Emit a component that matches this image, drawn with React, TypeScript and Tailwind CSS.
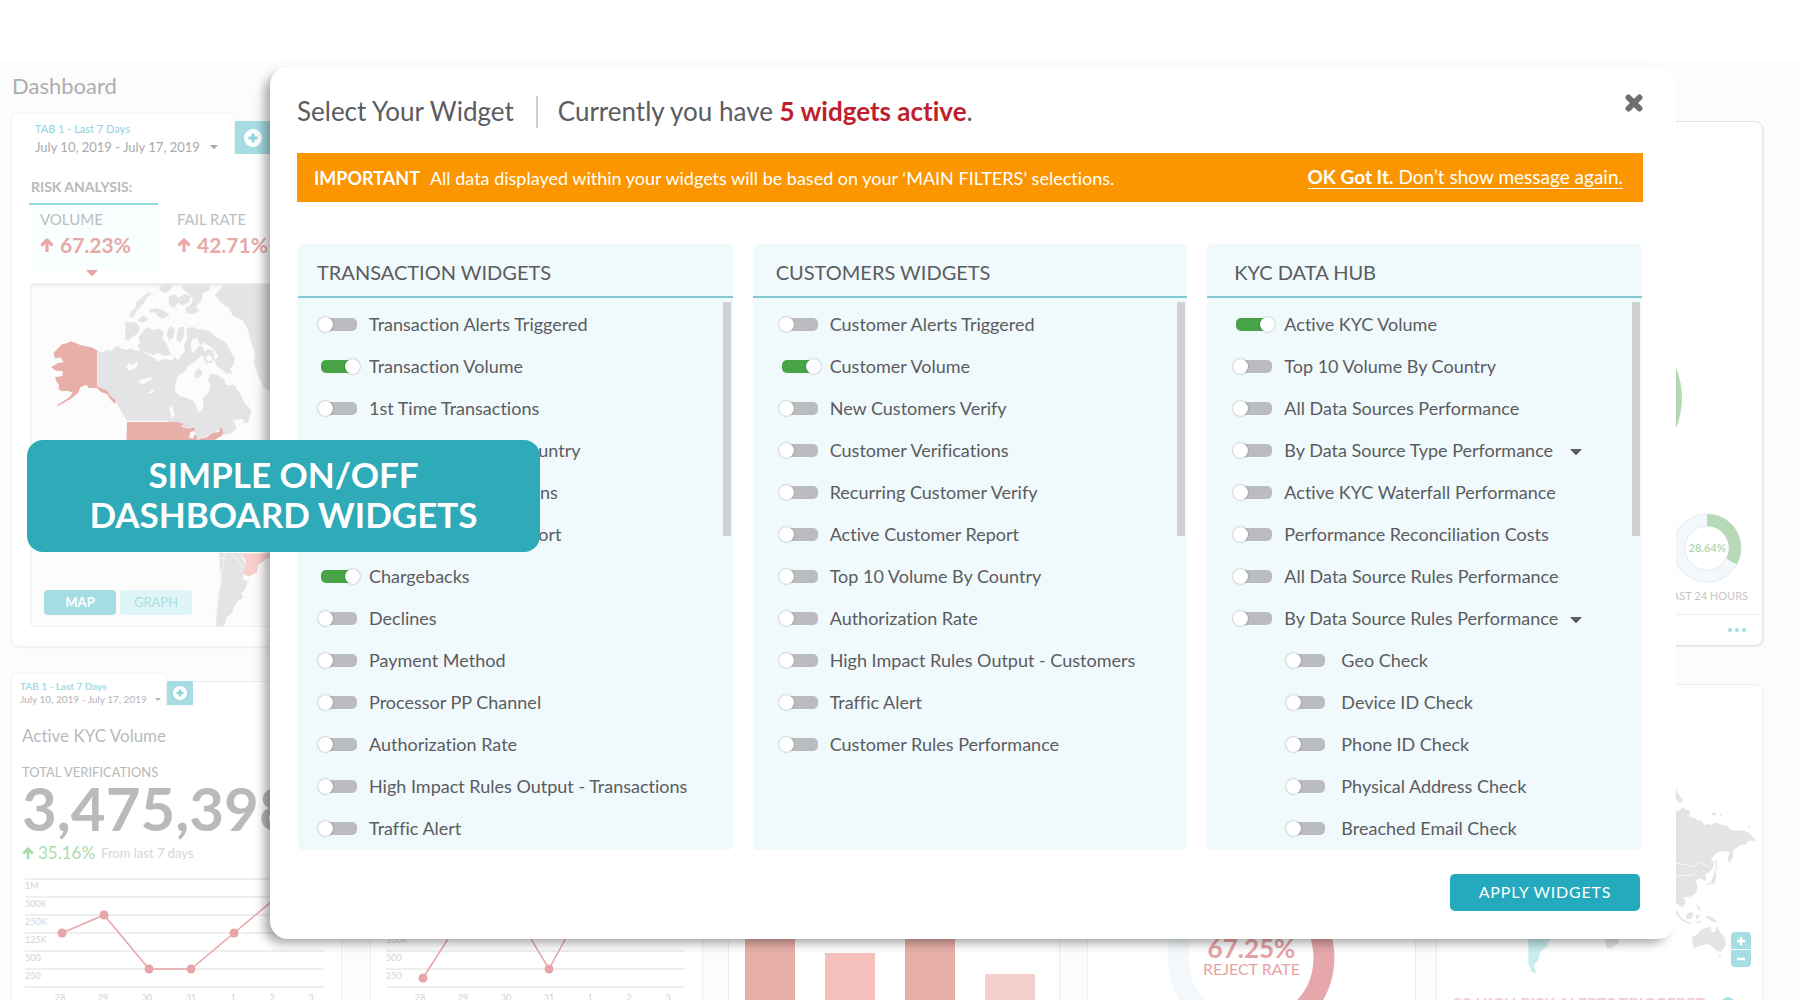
import { useState } from "react";

type Widget = { name: string; on?: boolean; menu?: boolean; nested?: boolean };

const TRANSACTIONS: Widget[] = [
  { name: "Transaction Alerts Triggered" },
  { name: "Transaction Volume", on: true },
  { name: "1st Time Transactions" },
  { name: "Top 10 Volume By Country" },
  { name: "Completed Transactions" },
  { name: "Daily Transaction Report" },
  { name: "Chargebacks", on: true },
  { name: "Declines" },
  { name: "Payment Method" },
  { name: "Processor PP Channel" },
  { name: "Authorization Rate" },
  { name: "High Impact Rules Output - Transactions" },
  { name: "Traffic Alert" },
];

const CUSTOMERS: Widget[] = [
  { name: "Customer Alerts Triggered" },
  { name: "Customer Volume", on: true },
  { name: "New Customers Verify" },
  { name: "Customer Verifications" },
  { name: "Recurring Customer Verify" },
  { name: "Active Customer Report" },
  { name: "Top 10 Volume By Country" },
  { name: "Authorization Rate" },
  { name: "High Impact Rules Output - Customers" },
  { name: "Traffic Alert" },
  { name: "Customer Rules Performance" },
];

const KYC: Widget[] = [
  { name: "Active KYC Volume", on: true },
  { name: "Top 10 Volume By Country" },
  { name: "All Data Sources Performance" },
  { name: "By Data Source Type Performance", menu: true },
  { name: "Active KYC Waterfall Performance" },
  { name: "Performance Reconciliation Costs" },
  { name: "All Data Source Rules Performance" },
  { name: "By Data Source Rules Performance", menu: true },
  { name: "Geo Check", nested: true },
  { name: "Device ID Check", nested: true },
  { name: "Phone ID Check", nested: true },
  { name: "Physical Address Check", nested: true },
  { name: "Breached Email Check", nested: true },
];

function Caret({ className }: { className: string }) {
  return (
    <svg viewBox="0 0 12 6" className={className} aria-hidden="true">
      <path d="M0 0h12L7 5.5q-1 .8-2 0z" fill="currentColor" />
    </svg>
  );
}

function ArrowUp({ className }: { className: string }) {
  return (
    <svg viewBox="0 0 14 14" className={className} aria-hidden="true">
      <path d="M7 14V2.5M1.500 7.500L7 2l5.500 5.500" fill="none" stroke="currentColor" strokeWidth="3.200" strokeLinejoin="round" />
    </svg>
  );
}

function PlusCircle({ className }: { className: string }) {
  return (
    <svg viewBox="0 0 18 18" className={className} aria-hidden="true">
      <circle cx="9" cy="9" r="9" fill="#fff" />
      <path d="M9 4.5v9M4.5 9h9" stroke="#8fd5de" strokeWidth="3" />
    </svg>
  );
}

function WidgetRow({ widget, id, gap }: { widget: Widget; id: string; gap: string }) {
  const [on, setOn] = useState(Boolean(widget.on));
  return (
    <li className={`flex h-[42px] items-center ${widget.nested ? "pl-[53px]" : ""}`}>
      <input
        id={id}
        type="checkbox"
        role="switch"
        checked={on}
        onChange={() => setOn(!on)}
        className="relative h-[13px] w-9 shrink-0 cursor-pointer appearance-none rounded-[5px] bg-[#bbbcc0] before:absolute before:-left-[3px] before:-top-px before:size-[15px] before:rounded-full before:bg-white before:shadow-[0_0_2px_rgba(0,0,0,0.4)] checked:bg-[#48a347] checked:before:left-6"
      />
      <label htmlFor={id} className={`cursor-pointer whitespace-nowrap ${widget.nested ? "pl-4" : gap}`}>
        {widget.name}
      </label>
      {widget.menu && (
        <button type="button" aria-label={`Expand ${widget.name}`} className="ml-auto mr-[60px] pt-1">
          <Caret className="h-1.5 w-3" />
        </button>
      )}
    </li>
  );
}

function WidgetColumn(props: { title: string; widgets: Widget[]; prefix: string; head: string; list: string; gap: string }) {
  return (
    <section className="relative flex-1 overflow-hidden rounded-[5px] bg-[#f0f9fb]">
      <h3 className={`flex h-[54px] items-center border-b-2 border-[#84c8d3] pt-1 text-xl ${props.head}`}>{props.title}</h3>
      <ul className={`pb-px pt-[5px] text-lg leading-6 ${props.list}`}>
        {props.widgets.map((w, i) => (
          <WidgetRow key={w.name} widget={w} id={`${props.prefix}-${i}`} gap={props.gap} />
        ))}
      </ul>
      <div className="absolute right-0.5 top-[58px] h-[234px] w-2 bg-[#d0d1d3]" />
    </section>
  );
}

function WidgetDialog() {
  return (
    <div
      role="dialog"
      aria-label="Select Your Widget"
      className="rounded-[18px] bg-white pb-7 pl-[27px] pr-[33px] text-[#5b5c5f] shadow-[-7px_6px_11px_-2px_rgba(0,0,0,0.36)]"
    >
      <header className="flex h-[86px] items-center">
        <h2 className="pt-0.5 text-[26px]">Select Your Widget</h2>
        <div className="ml-[22px] mt-1 h-8 w-0.5 bg-[#cfd0d2]" />
        <p className="ml-5 pt-0.5 text-[26px]">
          Currently you have <strong className="font-bold text-[#be1e2d]">5 widgets active</strong>.
        </p>
        <button type="button" aria-label="Close" className="ml-auto mb-3.5 text-[#6d6e71]">
          <svg viewBox="0 0 18 18" className="size-[18px]" aria-hidden="true">
            <path d="M3.5 3.5l11 11M14.5 3.5l-11 11" stroke="currentColor" strokeWidth="6" strokeLinecap="round" />
          </svg>
        </button>
      </header>
      <div className="flex h-[49px] items-center justify-between bg-[#fb9600] pl-[17px] pr-5 text-lg text-white">
        <p>
          <strong className="mr-2.5 font-bold">IMPORTANT</strong>
          All data displayed within your widgets will be based on your ‘MAIN FILTERS’ selections.
        </p>
        <a href="#dismiss" className="border-b border-white text-[19px] leading-[22px]">
          <strong className="font-bold">OK Got It.</strong> Don’t show message again.
        </a>
      </div>
      <div className="mt-[42px] flex gap-5 px-px">
        <WidgetColumn title="TRANSACTION WIDGETS" widgets={TRANSACTIONS} prefix="transaction" head="pl-[19px]" list="pl-[23px]" gap="pl-3" />
        <WidgetColumn title="CUSTOMERS WIDGETS" widgets={CUSTOMERS} prefix="customer" head="pl-[23px]" list="pl-[29px]" gap="pl-3" />
        <WidgetColumn title="KYC DATA HUB" widgets={KYC} prefix="kyc" head="pl-[27px]" list="pl-[29px]" gap="pl-3" />
      </div>
      <div className="mt-6 flex justify-end pr-[3px]">
        <button type="button" className="h-[37px] w-[190px] rounded-[5px] bg-[#25a9bd] pb-0.5 text-base tracking-wider text-white">
          APPLY WIDGETS
        </button>
      </div>
    </div>
  );
}

function AmericasMap() {
  return (
    <svg viewBox="90 38 900 1032" className="h-[344px] w-[300px]" aria-hidden="true">
      <g fill="#e4e4e6">
        <path d="M289 236l14 8 14-9 13 3 12-11 10-4 7 8 18 4 12-4 14 7 18-2 10 8 22 12 18 14 20-7 22 4 6-10 14 8 6-10 12-14-2-22 10-18 12 6-2 22 8 16 16-22 12 3 8 18-18 16-16 12-18 12-8 16-22 14-8 22-2 22 14 16 24 6 20 10 10 26 8 8 10-16-2-28 18-16 6-20-8-18 6-20 20 4 22 14 8 18 22-2 18 26 14 30 20 20-2 14-22 12-30 4-16 20 20-8 6 12-16 16-22 4-6-14-18 4-22 10-22 12-18 4 2-18-14-14-20-6-30-6-14-8-14-6H378l-16-26-14-24-14-20-18-18-14-8-13-4z" />
        <path d="M642 70l28-32h320v232l-132-10 20 30-54 26-2 24-14 20-18-10-18-36-14-40 4-28-10-26-12-46-16-28-28-12-12-24-20-12z" />
        <path d="M375 150l14 4 14-2 14 16-6 18-18 12-10 10-12-6zM412 198l16-20 12-10 16 8 20-4 14 12-6 16 14 20 12 30-18 4-20-8-18 6-16-8-16-4-14-16 10-12zM384 138l8-20 12-10 2-16 12-8 6 6-6 18-12 12-10 18zM410 148l14-14 14 2 2 12-18 6zM418 82l14-12 14-8 4 8-14 10-8 18-10 6zM446 114l18-4 26 8 16 12-20 12-14-6-8-12-18-2zM474 46l22-8h20l-6 16-16 12-18-8zM502 76l18-8 12 12 18-12 20 6-6 18-18 10-16-8-10 16-16-10zM540 46l24-8h64l-4 20-20 8-2 20-18 20 10 12-18 10-20-2-2-16 18-12 4-18-16-14zM496 186l12-22 14 10-6 26-12 8zM528 184l8-18 14 2-2 28-10 18-12-10zM556 174l16-8 22 8 30 4 22 20 30 16 14 30 12 14-4 24-12 10 10 14-20 2-14-14-16-10-6-18 14-12-18-22-26-18-12 8-10-22-14 2-4 12-10-12zM604 250l16-18 16 6 6 22-10 14-18 2zM580 306l12-16 14 12-10 16-14 2zM704 440l8-22 18-14 2 20 14 10-4 20-12 2-6-14zM664 452l22-12 16 16-20 10-22 20-4-16z" />
        <path d="M654 845h66l6 18 10 20-8 16-2 24 14 8-6 20-12 14 4 16-16 8-12 20-4 16-16 12-8 24-10 14 4 10h-14l-8-12 4-20-2-30 6-24 4-32 6-46z" />
      </g>
      <g fill="#fcfcfc">
        <path d="M374 286l12-10 10 6 12-10 4 8-12 12-16 6zM410 326l16-2 24-6 4 6-16 8-14 8-10-8 8-4zM442 364l14-10 6 2-12 12zM506 404l8 4 8 26-8 6-8-18z" />
        <circle cx="624" cy="261" r="9" />
      </g>
      <g fill="#e8aea8">
        <path d="M288 236L270 228 240 222 222 214 210 210 198 216 184 218 172 230 158 244 162 262 178 258 188 272 170 276 150 288 165 298 185 300 184 314 162 318 168 335 174 338 172 352 182 360 200 358 215 364 205 378 168 402 172 404 210 382 232 364 238 348 256 340 264 350 288 350 300 362 318 368 330 386 342 398 344 388 326 370 316 356 302 352 288 344z" />
        <path d="M378 452h150l20 6-8 8 26 6 14-4 2 10-14 4-4 16 12 4 6-14 6 12-2 6 30-8 20-14 18-2 6-16 8 20-10 10-22 12-10 14H376z" />
        <path d="M720 846h270l-190 14-16 12-12 8-4 22-24 14-20-10 12-24-6-22z" fill="#f6cfcc" />
      </g>
      <path d="M654 862l14-2 10-14M670 860l-8 50-10 70-6 60M694 850l10 10 16 20 6 10" fill="none" stroke="#f6f6f7" strokeWidth="3" />
    </svg>
  );
}

function VolumeCard() {
  return (
    <section className="h-[526px] w-[440px] rounded-lg rounded-tl-none border border-[#f1f1f2] bg-white shadow-[0_1px_2px_rgba(0,0,0,0.06)]">
      <div className="-ml-px -mt-[9px] flex h-[41px] items-end">
        <button type="button" className="h-[41px] w-56 rounded-t-md border border-b-0 border-[#f3f3f4] bg-white pl-[23px] pt-1.5 text-left">
          <span className="block text-[11px] leading-[18px] text-[#8fd3de]">TAB 1 - Last 7 Days</span>
          <span className="flex items-center text-[13px] leading-[18px] text-[#ababad]">
            July 10, 2019 - July 17, 2019 <Caret className="ml-2.5 h-1 w-2" />
          </span>
        </button>
        <button type="button" aria-label="Add tab" className="flex h-[33px] w-[35px] items-center justify-center bg-[#a6dde3]">
          <PlusCircle className="size-[18px]" />
        </button>
      </div>
      <h2 className="mt-6 pl-[19px] text-sm leading-[18px] font-bold text-[#b9b9bb]">RISK ANALYSIS:</h2>
      <div className="mt-[7px] flex pl-[17px]">
        <div className="h-[67px] w-[129px] border-t-2 border-[#93dbe3] bg-[#f9feff] pl-[11px] pt-1">
          <p className="text-[15px] leading-5 text-[#bdbdbf]">VOLUME</p>
          <p className="mt-0.5 flex items-center gap-1.5 text-[21px] leading-7 font-bold text-[#e8a9a6]">
            <ArrowUp className="size-3.5" />67.23%
          </p>
        </div>
        <div className="pl-[19px] pt-1.5">
          <p className="text-[15px] leading-5 text-[#bdbdbf]">FAIL RATE</p>
          <p className="mt-0.5 flex items-center gap-1.5 text-[21px] leading-7 font-bold text-[#e8a9a6]">
            <ArrowUp className="size-3.5" />42.71%
          </p>
        </div>
      </div>
      <Caret className="ml-[74px] h-1.5 w-3 text-[#e6a4a7]" />
      <div className="relative ml-[18px] mt-[7px] h-[344px] overflow-hidden rounded border border-[#f0f0f0] bg-[#fcfcfc] shadow-[inset_0_2px_3px_rgba(0,0,0,0.08)]">
        <AmericasMap />
        <div className="absolute bottom-[11px] left-[13px] flex gap-1 text-[13px]">
          <button type="button" className="h-[25px] w-[72px] rounded bg-[#a6dde3] font-bold text-white">MAP</button>
          <button type="button" className="h-[25px] w-[72px] rounded bg-[#dff5f7] text-[#a8dce1]">GRAPH</button>
        </div>
      </div>
    </section>
  );
}

function RatesCard() {
  return (
    <section className="flex h-[525px] w-[270px] flex-col items-end rounded-lg border border-[#e4e4e5] bg-white shadow-[1px_1px_1px_rgba(0,0,0,0.06)]">
      <svg viewBox="0 0 160 160" className="mr-[78px] mt-[196px] size-40" aria-hidden="true">
        <circle cx="80" cy="80" r="66" fill="none" stroke="#b5dab5" strokeWidth="24" />
      </svg>
      <div className="mt-[35px] mr-3.5 flex flex-col items-center">
        <div className="relative flex size-[70px] items-center justify-center">
          <svg viewBox="0 0 70 70" className="absolute inset-0" aria-hidden="true">
            <circle cx="35" cy="35" r="28" fill="none" stroke="#e8ebee" strokeWidth="13" />
            <circle cx="35" cy="35" r="28" fill="none" stroke="#f2f8fc" strokeWidth="11" />
            <path d="M35 7a28 28 0 0 1 24.500 41.500" fill="none" stroke="#b5dab5" strokeWidth="12" />
          </svg>
          <span className="relative text-[11px] font-bold text-[#b5dab5]">28.64%</span>
        </div>
        <p className="mt-[3px] text-[11px] leading-5 text-[#c6c6c8]">LAST 24 HOURS</p>
      </div>
      <div className="mt-auto flex h-[31px] w-full items-center justify-end border-t border-[#eeeeef] pr-4">
        <button type="button" aria-label="More" className="flex gap-[3px]">
          <span className="size-1 rounded-full bg-[#a3dce4]" />
          <span className="size-1 rounded-full bg-[#a3dce4]" />
          <span className="size-1 rounded-full bg-[#a3dce4]" />
        </button>
      </div>
    </section>
  );
}

const DAYS = ["28", "29", "30", "31", "1", "2", "3"];

function LineChart(props: { lines: number[]; labels: string[]; dayX: number[]; points: number[][]; path: string; height: number; className: string }) {
  return (
    <svg viewBox={`0 0 300 ${props.height}`} className={props.className} fontFamily="Lato" fontSize="9">
      {props.lines.map((y) => (
        <path key={y} d={`M0 ${y}h299`} stroke="#dedfe0" strokeWidth="1.200" />
      ))}
      {props.labels.map((t, i) => (
        <text key={t} x="0" y={props.lines[i] + 10} fill="#d3d3d5">{t}</text>
      ))}
      {DAYS.map((t, i) => (
        <text key={t} x={props.dayX[i]} y={props.height - 1} fill="#cfcfd1" textAnchor="middle">{t}</text>
      ))}
      <path d={props.path} fill="none" stroke="#e8a5a8" strokeWidth="1.500" />
      {props.points.map(([x, y]) => (
        <circle key={x} cx={x} cy={y} r="4.500" fill="#e8a5a8" />
      ))}
    </svg>
  );
}

const CARD = "h-[420px] min-w-0 basis-0 border border-[#efeff0] bg-white";

function KycCard() {
  return (
    <section className={`${CARD} grow-[331] rounded-tr-lg`}>
      <div className="-ml-px -mt-[9px] flex h-8 items-end">
        <button type="button" className="h-8 w-[156px] rounded-t-md border border-b-0 border-[#f3f3f4] bg-white pl-2 pt-1.5 text-left">
          <span className="block text-[10px] leading-[13px] font-bold text-[#a3dbe3]">TAB 1 - Last 7 Days</span>
          <span className="flex items-center whitespace-nowrap text-[10px] leading-[13px] text-[#b5b5b7]">
            July 10, 2019 - July 17, 2019 <Caret className="ml-2 h-[3px] w-1.5" />
          </span>
        </button>
        <button type="button" aria-label="Add tab" className="flex h-6 w-[26px] items-center justify-center bg-[#a6dde3]">
          <PlusCircle className="size-3.5" />
        </button>
      </div>
      <div className="pl-2.5">
        <h2 className="mt-[19px] text-[17px] leading-6 text-[#b9b9bb]">Active KYC Volume</h2>
        <p className="mt-[15px] text-[13px] leading-[18px] text-[#b9b9bb]">TOTAL VERIFICATIONS</p>
        <p className="text-[60px] leading-[54px] font-bold text-[#bababc]">3,475,398</p>
        <p className="mt-1.5 flex items-center text-[17px] leading-6 text-[#a9dbab]">
          <ArrowUp className="mr-1 size-3" />35.16%
          <span className="ml-1.5 text-[13px] text-[#d5d5d6]">From last 7 days</span>
        </p>
      </div>
      <LineChart
        className="ml-[13px] mt-2.5 h-[127px] w-[300px]"
        height={127}
        lines={[4, 22, 40, 58, 76, 94, 112]}
        labels={["1M", "500K", "250K", "125K", "500", "250"]}
        dayX={[35, 78, 122, 166, 208, 247, 286]}
        points={[[37, 58], [79, 40], [124, 94], [166, 94], [209, 58]]}
        path="M37 58L79 40L124 94H166L209 58L252 22"
      />
    </section>
  );
}

function AlertsCard() {
  return (
    <section className={`${CARD} ml-5 mt-[3px] grow-[327] rounded-tr-lg`}>
      <div className="relative flex justify-end pr-0.5 pt-[100px]">
        <svg viewBox="-540 375 900 600" className="h-[200px] w-[300px]" aria-hidden="true">
          <g fill="#e4e4e6">
            <path d="M100 460L122 450 128 440 135 448 150 452 148 470 160 472 172 480 185 482 192 495 200 492 215 495 225 487 240 492 262 498 272 510 295 512 310 510 325 518 345 538 348 545 335 540 320 545 322 552 300 556 290 565 278 570 280 590 268 610 262 595 270 575 250 574 232 577 212 598 222 605 220 620 208 637 195 645 200 658 192 664 186 655 168 660 172 680 168 700 150 710 130 712 138 730 128 742 115 735 100 720z" />
            <path d="M108 388l8 15 14 20-10 6-12-12zM215 458h16l-4 8h-12zM238 462l10 2-8 4zM322 498h10l-4 4zM226 600l4 2 2 28h-4zM225 628l4 18-4 24-14 2-12 6 2-6 10-4 8-16zM108 748l17 26 15 10 15 4-3 4-20-6-16-14-8-14zM160 786l30-2-12 6zM138 765l17-12 5 10-8 15-14-1zM166 766l14-2-8 16zM195 768l20 2 20 18-18-3-12-8zM170 732l8 8 4 16-8-8z" />
            <path d="M155 832L170 825 185 808 200 803 212 800 215 815 225 817 230 797 240 817 255 835 257 855 245 875 230 872 215 858 200 852 180 858 162 865 158 850zM235 884h9l-4 8z" />
            <path d="M-110 820h52l-8 30-18 14-14 2-8-20z" />
          </g>
          <path d="M-335 820h70l-14 40-20 14-6 26-14 16 8 24-14-4-10-26z" fill="#c8eef0" />
          <path d="M108 610l30 4 24 6 16-14 30 16M108 646h50l14-14" fill="none" stroke="#f8f8f8" strokeWidth="3" />
        </svg>
        <div className="absolute bottom-[18px] right-[11px] flex w-5 flex-col gap-px overflow-hidden rounded">
          <button type="button" aria-label="Zoom in" className="flex h-[17px] items-center justify-center bg-[#a6dde3]">
            <svg viewBox="0 0 8 8" className="size-2" aria-hidden="true">
              <path d="M4 0v8M0 4h8" stroke="#fff" strokeWidth="2.500" />
            </svg>
          </button>
          <button type="button" aria-label="Zoom out" className="flex h-[17px] items-center justify-center bg-[#a6dde3]">
            <svg viewBox="0 0 8 8" className="size-2" aria-hidden="true">
              <path d="M0 4h8" stroke="#fff" strokeWidth="2.500" />
            </svg>
          </button>
        </div>
      </div>
      <div className="mt-2 flex items-start gap-3.5 pl-4">
        <p className="whitespace-nowrap text-base leading-5 font-bold text-[#f2cdd0]">20 HIGH RISK ALERTS TRIGGERED</p>
        <span className="mt-1 size-3 rounded-full bg-[#a6dde3]" />
      </div>
    </section>
  );
}

function Dashboard() {
  return (
    <main className="h-full bg-[#fcfcfc] pl-[11px] pr-[37px]">
      <h1 className="flex h-[49px] items-center pb-0.5 pl-px text-[22px] text-[#adadaf]">Dashboard</h1>
      <div className="mt-2.5 flex items-start justify-between">
        <VolumeCard />
        <RatesCard />
      </div>
      <div className="mt-[34px] flex items-start">
        <KycCard />
        <section className={`${CARD} ml-7 grow-[333] pt-[210px]`}>
          <LineChart
            className="ml-[15px] h-[110px] w-[300px]"
            height={110}
            lines={[41, 59, 77, 95]}
            labels={["100K", "500", "250"]}
            dayX={[34, 77, 120, 163, 204, 243, 282]}
            points={[[37, 86], [163, 77]]}
            path="M37 86L92 0L117 0L163 77L205 0"
          />
        </section>
        <section className={`${CARD} ml-[25px] grow-[332] pt-[158px]`}>
          <div className="mx-4 flex h-40 items-end justify-between pr-2">
            <div className="h-full w-[50px] bg-[#e8aea8]" />
            <div className="h-[47px] w-[50px] bg-[#f5bfbc]" />
            <div className="h-full w-[50px] bg-[#e8aea8]" />
            <div className="h-[26px] w-[50px] bg-[#f5d1ce]" />
          </div>
        </section>
        <section className={`${CARD} ml-[27px] grow-[329] pt-48`}>
          <div className="relative mx-auto flex size-[168px] flex-col items-center pt-[61px] text-[#e6a3a6]">
            <svg viewBox="0 0 168 168" className="absolute inset-0" aria-hidden="true">
              <path d="M84 157a73 73 0 0 1 0-146" fill="none" stroke="#f2f8fc" strokeWidth="21" />
              <path d="M84 11a73 73 0 0 1 0 146" fill="none" stroke="#e5a7a9" strokeWidth="21" />
            </svg>
            <p className="relative text-[26px] leading-[26px] font-bold">67.25%</p>
            <p className="relative text-base leading-4">REJECT RATE</p>
          </div>
        </section>
        <AlertsCard />
      </div>
    </main>
  );
}

export default function App() {
  return (
    <div className="relative h-screen overflow-hidden bg-white pt-[62px] font-['Lato',sans-serif] [font-variant-ligatures:none]">
      <Dashboard />
      <div className="absolute inset-x-0 top-[67px] pl-[270px] pr-[124px]">
        <WidgetDialog />
      </div>
      <div className="absolute left-[27px] top-[440px] flex h-28 w-[513px] items-center justify-center rounded-2xl bg-[#2eaab9] pb-1 text-center text-[35px] leading-10 font-bold text-white">
        <p>
          SIMPLE ON/OFF
          <br />
          DASHBOARD WIDGETS
        </p>
      </div>
    </div>
  );
}
